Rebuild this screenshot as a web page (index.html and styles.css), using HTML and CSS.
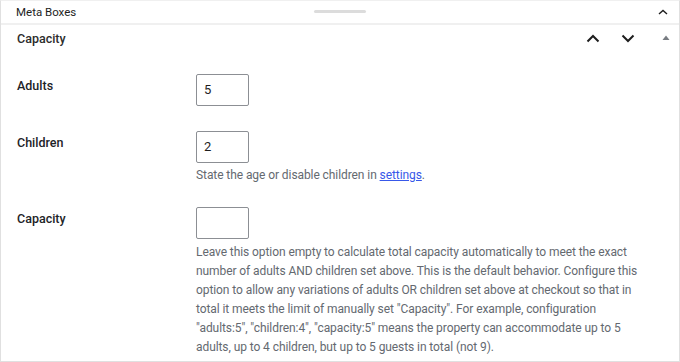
FILE: index.html
```html
<!DOCTYPE html>
<html>
<head>
<meta charset="utf-8">
<link rel="stylesheet" href="styles.css">
</head>
<body>
<div class="panel">
  <div class="topbar">
    <span class="topbar-title">Meta Boxes</span>
    <span class="handle"></span>
    <svg class="top-chev" width="10" height="6" viewBox="0 0 10 6"><polyline points="1,5 5,1.5 9,5" fill="none" stroke="#1e1e1e" stroke-width="1.4"/></svg>
  </div>
  <div class="box-header">
    <span class="box-title">Capacity</span>
    <div class="box-actions">
      <svg class="chev" width="14" height="9" viewBox="0 0 14 9"><polyline points="1.5,7.5 7,2 12.5,7.5" fill="none" stroke="#1e1e1e" stroke-width="2"/></svg>
      <svg class="chev" width="14" height="9" viewBox="0 0 14 9"><polyline points="1.5,1.5 7,7 12.5,1.5" fill="none" stroke="#1e1e1e" stroke-width="2"/></svg>
      <svg class="tri" width="8" height="6" viewBox="0 0 8 6"><polygon points="4,0.5 7.5,5 0.5,5" fill="#787c82"/></svg>
    </div>
  </div>
  <div class="form">
    <div class="row row-adults">
      <div class="label">Adults</div>
      <div class="field"><div class="input">5</div></div>
    </div>
    <div class="row row-children">
      <div class="label">Children</div>
      <div class="field">
        <div class="input">2</div>
        <p class="desc">State the age or disable children in <a href="#">settings</a>.</p>
      </div>
    </div>
    <div class="row row-capacity">
      <div class="label">Capacity</div>
      <div class="field">
        <div class="input"></div>
        <p class="desc long">Leave this option empty to calculate total capacity automatically to meet the exact<br>number of adults AND children set above. This is the default behavior. Configure this<br>option to allow any variations of adults OR children set above at checkout so that in<br>total it meets the limit of manually set "Capacity". For example, configuration<br>"adults:5", "children:4", "capacity:5" means the property can accommodate up to 5<br>adults, up to 4 children, but up to 5 guests in total (not 9).</p>
      </div>
    </div>
  </div>
</div>
</body>
</html>
```
FILE: styles.css
```css
html, body {
  margin: 0;
  padding: 0;
  background: #ffffff;
}
body {
  font-family: Roboto, "Liberation Sans", Arial, sans-serif;
  color: #1e1e1e;
  width: 680px;
  height: 362px;
  overflow: hidden;
}
.panel {
  box-sizing: border-box;
  width: 680px;
  height: 362px;
  border: 1px solid #e0e0e0;
  border-top: 1px solid #f0f0f0;
  position: relative;
}
.topbar {
  height: 22px;
  display: flex;
  align-items: center;
  padding: 0 11px 0 15px;
  border-bottom: 2px solid #f0f0f0;
  position: relative;
}
.topbar-title {
  font-size: 11.5px;
  color: #1e1e1e;
}
.handle {
  position: absolute;
  left: 313px;
  top: 9px;
  width: 52px;
  height: 3px;
  border-radius: 2px;
  background: #dcdcdc;
}
.top-chev {
  margin-left: auto;
}
.box-header {
  height: 26px;
  display: flex;
  align-items: center;
  padding: 0 9px 0 16px;
}
.box-title {
  font-size: 12.5px;
  font-weight: 500;
  color: #2c2c2c;
}
.box-actions {
  margin-left: auto;
  display: flex;
  align-items: center;
}
.chev {
  margin-right: 21px;
}
.tri {
  margin-left: 6px;
}
.form {
  padding-left: 16px;
}
.row {
  display: flex;
}
.row-adults { margin-top: 23px; }
.row-children { margin-top: 25px; }
.row-capacity { margin-top: 23px; }
.label {
  width: 179px;
  flex: none;
  font-size: 12.5px;
  font-weight: 500;
  color: #1d2327;
  padding-top: 3px;
  line-height: 18px;
}
.field {
  flex: 1;
}
.input {
  box-sizing: border-box;
  width: 53px;
  height: 32px;
  border: 1px solid #8c8f94;
  border-radius: 2px;
  font-size: 13px;
  line-height: 30px;
  padding-left: 7px;
  color: #1e1e1e;
}
.desc {
  margin: 3px 0 0;
  font-size: 12px;
  letter-spacing: -0.08px;
  line-height: 18px;
  color: #646970;
  white-space: nowrap;
}
.desc a {
  color: #3858e9;
  text-decoration: underline;
}
.desc.long {
  line-height: 19px;
  margin-top: 4px;
}
```
